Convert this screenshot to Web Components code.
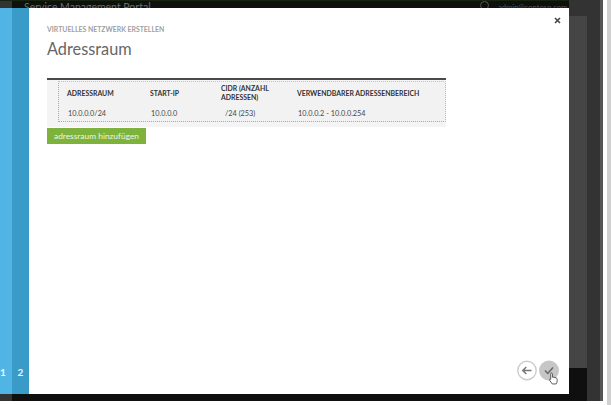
<!DOCTYPE html>
<html>
<head>
<meta charset="utf-8">
<style>
  html, body { margin: 0; padding: 0; width: 611px; height: 405px; overflow: hidden; background: #fff; font-family: Lato, "Open Sans", "Liberation Sans", sans-serif; }
</style>
</head>
<body>
<portal-shell>
  <wizard-dialog title-small="VIRTUELLES NETZWERK ERSTELLEN" title-big="Adressraum">
    <address-table></address-table>
    <add-button>adressraum hinzufügen</add-button>
  </wizard-dialog>
</portal-shell>
<script>
class PortalShell extends HTMLElement {
  connectedCallback() {
    this.attachShadow({ mode: 'open' });
    this.shadowRoot.innerHTML = `
      <style>
        :host { display: block; position: relative; width: 611px; height: 405px; background: #fff; overflow: hidden; }
        .screen { position: absolute; left: 0; top: 0; width: 603px; height: 401px; background: #454545; display: flex; flex-direction: column; }
        .top { height: 16px; background: #0e100d; border-top: 1px solid #16240f; box-sizing: border-box; display: flex; align-items: flex-start; color: #6d6d6d; font-size: 10.5px; line-height: 12px; }
        .top .logo { width: 12px; height: 8px; background: #333; margin-right: 12px; }
        .top .globe { position: absolute; left: 480px; top: 1px; }
        .top .user { position: absolute; left: 498px; top: 1px; color: #555; font-size: 7.6px; }
        .strip { position: absolute; left: 587px; top: 0; bottom: 0; width: 13px; background: #333; }
        .shade { position: absolute; left: 600px; top: 0; bottom: 0; width: 3px; background: #555; }
        .bottom { position: absolute; left: 0; width: 587px; top: 368px; bottom: 0; background: #0f0f10; }
        .corner { position: absolute; left: 0; top: 394px; bottom: 0; width: 12px; background: #333; }
        .avatar { position: absolute; left: 569px; top: 0; width: 18px; height: 16px; background: #333; }
        .edge { position: absolute; left: 607px; top: 0; bottom: 0; width: 4px; background: #d0d0d0; }
      </style>
      <div class="screen">
        <div class="top"><div class="logo"></div><div class="name">Service Management Portal</div>
          <svg class="globe" width="9" height="9" viewBox="0 0 9 9"><circle cx="4.5" cy="4.5" r="4" fill="none" stroke="#555"/></svg>
          <div class="user">admin@contoso.com</div></div>
        <div class="strip"></div>
        <div class="shade"></div>
        <div class="bottom"></div>
        <div class="corner"></div>
        <div class="avatar"></div>
      </div>
      <div class="edge"></div>
      <slot></slot>
    `;
  }
}
customElements.define('portal-shell', PortalShell);

class WizardDialog extends HTMLElement {
  connectedCallback() {
    this.attachShadow({ mode: 'open' });
    this.shadowRoot.innerHTML = `
      <style>
        :host { display: flex; position: absolute; left: 0; top: 8px; width: 569px; height: 386px; }
        .steps { width: 29px; display: flex; color: #eaf6fc; font-size: 10px; font-weight: 700; background: #3a9ac8; }
        .steps > div { height: 100%; display: flex; align-items: flex-end; padding-bottom: 15px; box-sizing: border-box; line-height: 14px; }
        .steps .a { width: 12px; background: #50b4e5; padding-left: 0; }
        .steps .b { flex: 1; justify-content: center; padding-right: 0; }
        .main { flex: 1; background: #fff; padding: 16px 18px; position: relative; }
        .small { font-size: 6.9px; font-weight: 700; color: #a0a0a0; line-height: 10px; }
        h1 { margin: 3px 0 0; font-size: 16.3px; font-weight: 400; color: #666; line-height: 24px; }
        .content { margin-top: 17px; }
        .close { position: absolute; right: 8px; top: 9px; width: 7px; height: 7px; }
        .nav { position: absolute; right: 10px; bottom: 13px; display: flex; gap: 2px; }
        .nav svg { display: block; }
        .hand { position: absolute; left: 519px; top: 364px; }
      </style>
      <div class="steps"><div class="a">1</div><div class="b">2</div></div>
      <div class="main">
        <div class="small">${this.getAttribute('title-small')}</div>
        <h1>${this.getAttribute('title-big')}</h1>
        <div class="content"><slot></slot></div>
        <svg class="close" viewBox="0 0 7 7"><path d="M1 1L6 6M6 1L1 6" stroke="#444" stroke-width="1.6"/></svg>
        <div class="nav">
          <svg width="20" height="21" viewBox="0 0 20 21"><circle cx="10" cy="10.5" r="9.2" fill="#fff" stroke="#ccc" stroke-width="1.4"/><path d="M14.5 10.5H6M9.3 7L5.8 10.5L9.3 14" fill="none" stroke="#777" stroke-width="1.5"/></svg>
          <svg width="20" height="21" viewBox="0 0 20 21"><circle cx="10" cy="10.5" r="10" fill="#c6c6c6"/><path d="M6 10.5L8.8 13.5L14 7.5" fill="none" stroke="#666" stroke-width="1.5"/></svg>
        </div>
        <svg class="hand" width="11" height="13" viewBox="0 0 12 15"><path d="M3.5 1.2c.8 0 1.3.5 1.3 1.3V6h.6c1.2 0 3.6.4 4.3 1.2.5.6.6 1.5.6 2.6 0 1.5-.5 3-1.3 4H4.6L1.4 9.4c-.6-.9.5-1.7 1.3-1l.1.1V2.5c0-.8.3-1.3.7-1.3z" fill="#fff" stroke="#333" stroke-width=".9"/></svg>
      </div>
    `;
  }
}
customElements.define('wizard-dialog', WizardDialog);

class AddressTable extends HTMLElement {
  connectedCallback() {
    this.attachShadow({ mode: 'open' });
    this.shadowRoot.innerHTML = `
      <style>
        :host { display: block; width: 399px; background: #f4f4f4; border-top: 2px solid #4a4a4a; padding: 1px 0 5px; }
        .inner { margin-left: 11px; border: 1px dotted #aaa; border-top-color: #c4c4c4; border-right-color: #bbb; display: grid; grid-template-columns: 83px 71px 76px 1fr; grid-template-rows: 22px 1fr; height: 41px; box-sizing: border-box; color: #484848; font-size: 7.3px; background: #f2f2f2; }
        .h { font-weight: 700; color: #333; font-size: 6.9px; line-height: 9px; padding-left: 8px; display: flex; align-items: center; }
        .d { padding-left: 9px; line-height: 12px; padding-top: 4px; }
        .d.cidr { padding-left: 12px; }
      </style>
      <div class="inner">
        <div class="h">ADRESSRAUM</div><div class="h">START-IP</div><div class="h">CIDR (ANZAHL<br>ADRESSEN)</div><div class="h">VERWENDBARER ADRESSENBEREICH</div>
        <div class="d">10.0.0.0/24</div><div class="d">10.0.0.0</div><div class="d cidr">/24 (253)</div><div class="d">10.0.0.2 - 10.0.0.254</div>
      </div>
    `;
  }
}
customElements.define('address-table', AddressTable);

class AddButton extends HTMLElement {
  connectedCallback() {
    this.attachShadow({ mode: 'open' });
    this.shadowRoot.innerHTML = `
      <style>
        :host { display: block; width: 99px; box-sizing: border-box; text-align: center; margin-top: 1px; background: #7db33c; color: #eef5e2; font-size: 8.4px; line-height: 16px; height: 16px; white-space: nowrap; }
      </style>
      <slot></slot>
    `;
  }
}
customElements.define('add-button', AddButton);
</script>
</body>
</html>
